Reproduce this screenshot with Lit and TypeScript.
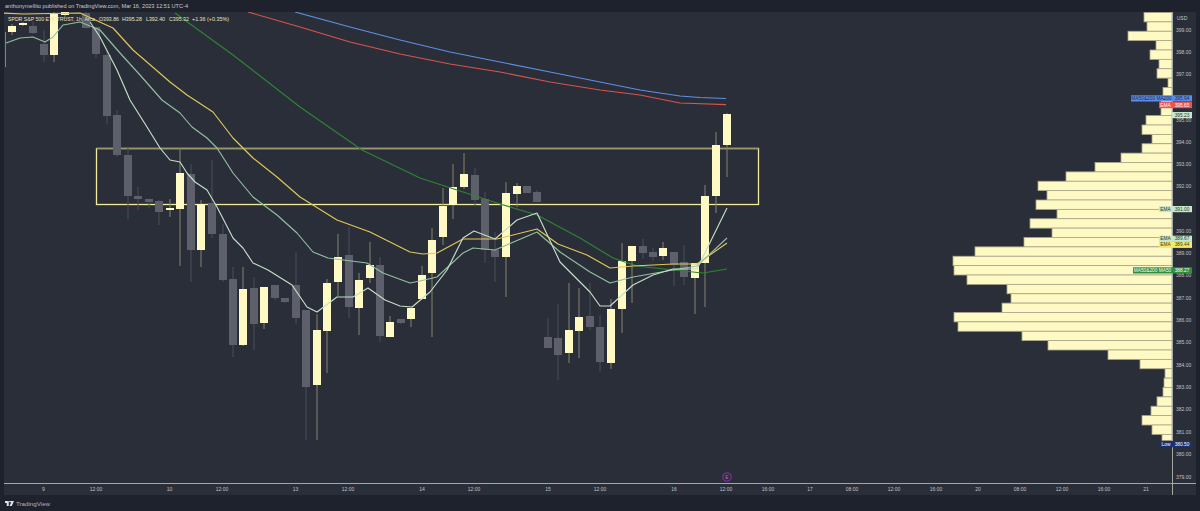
import { LitElement, html, css, svg } from "lit";
import { customElement } from "lit/decorators.js";

type C = [number, number, number, number, number, number];
const candles: C[] = [
  [8,26,32,24,35,1],[19,23,25,22,26,1],[29,26,33,22,34,0],[40,44,55,30,62,0],[50,14,55,12,62,1],[61,12,15,12,19,1],
  [82,13,28,12,28,0],[92,27,54,27,58,0],[103,55,116,50,124,0],[113,115,155,110,157,0],[124,155,196,148,219,0],
  [134,196,199,187,210,0],[145,199,202,199,208,0],[155,201,212,200,225,0],[166,208,210,199,217,1],[176,173,209,148,266,1],
  [187,174,250,164,282,0],[197,204,250,200,267,1],[208,203,234,160,238,0],[219,234,280,224,282,0],[229,279,345,267,357,0],
  [239,289,345,267,346,1],[250,288,324,277,350,0],[260,287,323,287,329,1],[271,285,298,285,300,0],[281,298,302,298,303,0],
  [292,285,318,252,324,0],[302,310,387,310,440,0],[313,330,385,314,440,1],[323,283,331,279,373,1],[334,257,282,234,296,1],
  [345,255,307,227,318,0],[355,280,308,273,335,1],[366,265,278,242,283,1],[376,265,336,257,342,0],[386,322,337,316,337,1],
  [397,319,323,319,324,0],[407,308,319,308,327,1],[418,275,299,266,299,1],[428,240,273,228,337,1],[439,206,237,188,245,1],
  [449,187,205,164,219,1],[460,174,187,153,189,1],[471,175,200,168,206,0],[481,199,250,192,263,0],[491,250,257,232,282,0],
  [502,193,257,182,297,1],[513,186,194,183,207,1],[523,186,193,186,193,0],[533,192,202,190,202,0],[544,337,348,318,348,0],
  [554,338,355,304,380,0],[565,330,353,283,363,1],[575,317,331,288,358,1],[586,316,327,283,330,0],[596,327,362,315,372,0],
  [607,309,363,299,369,1],[618,261,309,243,333,1],[628,246,261,246,303,1],[639,246,253,239,259,0],[649,252,257,248,261,0],
  [659,248,256,242,260,1],[670,252,265,252,286,0],[680,262,277,245,285,0],[691,263,278,263,314,1],[701,196,263,185,307,1],
  [712,145,196,132,213,1],[723,114,145,113,177,1],
];

const lines: { c: string; p: number[][] }[] = [
  { c: "#5f8fe6", p: [[295,12],[350,27],[400,40],[450,52],[500,62],[550,72],[600,82],[640,90],[680,96],[700,97.5],[726,98.5]] },
  { c: "#d9534f", p: [[248,12],[300,27],[350,42],[400,54],[450,64],[500,72],[550,82],[600,90],[640,95],[680,103],[726,104.6]] },
  { c: "#2e8534", p: [[175,13],[233,55],[300,107],[362,150],[420,178],[500,204],[537,215],[580,238],[613,258],[637,266],[673,270],[703,273],[727,269]] },
  { c: "#e0c955", p: [[0,13],[23,14],[80,13],[113,28],[133,50],[170,82],[187,95],[213,112],[233,138],[253,158],[277,177],[300,197],[337,220],[370,232],[410,252],[423,254],[437,253],[463,239],[497,239],[537,229],[558,244],[587,255],[610,268],[633,266],[673,264],[697,264],[727,243]] },
  { c: "#93bfa0", p: [[6,43],[20,38],[33,37],[45,42],[53,37],[63,25],[80,22],[100,30],[120,53],[140,75],[162,100],[180,113],[192,127],[207,138],[217,148],[233,173],[253,197],[277,215],[297,233],[313,252],[328,258],[367,263],[383,273],[410,283],[420,281],[437,277],[463,253],[473,248],[495,250],[537,232],[560,252],[590,272],[610,283],[633,277],[673,270],[697,266],[727,238]] },
  { c: "#c4dfc8", p: [[90,22],[100,37],[117,70],[130,100],[147,127],[160,148],[170,160],[180,162],[187,173],[195,182],[207,190],[217,207],[233,238],[243,248],[253,263],[268,270],[292,285],[307,307],[317,312],[337,297],[353,297],[368,288],[385,300],[400,306],[412,307],[430,292],[447,270],[463,238],[474,231],[495,239],[517,220],[537,213],[560,262],[590,292],[600,306],[610,306],[633,285],[653,275],[673,269],[697,269],[727,208]] },
];

const vp = [1144,1147,1128,1156,1150,1159,1157,1168,1163,1161,1161,1146,1142,1152,1142,1121,1095,1066,1038,1047,1036,1057,1030,1052,1024,975,953,954,967,1007,1011,1002,954,958,1022,1048,1108,1140,1165,1164,1163,1157,1151,1142,1152,1162];

const prices: [string, number][] = [["399.00",30],["398.00",52],["397.00",74.5],["395.00",120],["394.00",142],["393.00",164],["392.00",186.5],["390.00",231],["389.00",253],["388.00",275.5],["387.00",298],["386.00",320],["385.00",342.5],["384.00",365],["383.00",387],["382.00",409.5],["381.00",432],["380.00",454.5],["379.00",477]];
const times: [string, number][] = [["9",43.5],["12:00",96],["10",169.5],["12:00",222],["13",295.5],["12:00",348],["14",422],["12:00",474],["15",548],["12:00",600],["16",674],["12:00",726],["16:00",768],["17",810],["08:00",852],["12:00",894],["16:00",936],["20",978],["08:00",1020],["12:00",1062],["16:00",1104],["21",1146]];

type L = { y: number; x: number; name: string; val: string; bg: string; txt: string };
const labels: L[] = [
  { y: 95.3, x: 1131, name: "MA50&200 MA200", val: "395.94", bg: "#5b8dea", txt: "#1f2a44" },
  { y: 102, x: 1159, name: "EMA", val: "395.65", bg: "#ea5350", txt: "#ffffff" },
  { y: 112, x: 1172, name: "", val: "395.23", bg: "#c8e6c9", txt: "#2a3a2e" },
  { y: 206, x: 1159, name: "EMA", val: "391.00", bg: "#c8e6c9", txt: "#2a3a2e" },
  { y: 235.7, x: 1159, name: "EMA", val: "389.67", bg: "#c8e6c9", txt: "#2a3a2e" },
  { y: 241.7, x: 1159, name: "EMA", val: "389.44", bg: "#f6e96b", txt: "#3a3a20" },
  { y: 267.3, x: 1133, name: "MA50&200 MA50", val: "388.27", bg: "#2f8f3a", txt: "#ffffff" },
  { y: 441, x: 1160, name: "Low", val: "380.50", bg: "#1b2f6e", txt: "#ffffff" },
];

const legendParts: [string, number, number][] = [
  ["SPDR S&P 500 ETF TRUST, 1h, Arca", 8, 87],
  ["O393.86", 99, 20],
  ["H395.28", 122, 20],
  ["L392.40", 146, 19],
  ["C395.32", 169, 20],
  ["+1.36 (+0.35%)", 192, 37],
];

@customElement("app-root")
export class AppRoot extends LitElement {
  static styles = css`
    :host { display: block; width: 1200px; height: 511px; background: #1e222d; overflow: hidden; }
    .page { display: flex; flex-direction: column; width: 1200px; height: 511px; font-family: "Liberation Sans", Arial, sans-serif; }
    .head { height: 12px; padding-left: 5px; font-size: 5.6px; line-height: 12px; color: #c9cbce; white-space: nowrap; }
    .panel { height: 483px; margin: 0 4px; background: #2a2e39; }
    .chart { display: block; width: 1192px; height: 483px; }
    .foot { display: flex; align-items: center; gap: 2px; height: 16px; padding: 0 0 0 5px; color: #b2b5be; font-size: 6.2px; }
    .logo { width: 9px; height: 5px; display: block; }
    .wick-up { stroke: #85836f; }
    .wick-down { stroke: #4b4e59; }
    .up { fill: #fff9c4; }
    .down { fill: #5d606b; }
    .row { fill: #fff9c4; stroke: #a9a78c; stroke-width: 0.8; }
    .ln { fill: none; stroke-width: 1.15; stroke-linejoin: round; }
    .axis { stroke: #a3a8a3; stroke-width: 1; }
    .tick { font-size: 5px; fill: #c0c3c6; font-family: "Liberation Sans", Arial, sans-serif; }
    .legend { font-size: 5.4px; fill: #e6e4c4; font-family: "Liberation Sans", Arial, sans-serif; }
    .lab { font-size: 4.8px; font-family: "Liberation Sans", Arial, sans-serif; }
    .box { fill: none; stroke: #f3ec9c; stroke-width: 1.3; }
    .box-top { stroke: #98956f; stroke-width: 1.3; }
    .earth { fill: #2a2e39; stroke: #7b2ea0; stroke-width: 1.3; }
    .earth-t { font-size: 5px; fill: #a878cc; font-family: "Liberation Sans", Arial, sans-serif; }
  `;

  render() {
    return html`<div class="page">
      <div class="head">anthonymellito published on TradingView.com, Mar 16, 2023 12:51 UTC-4</div>
      <div class="panel">
        <svg class="chart" viewBox="4 12 1192 483">
          <rect class="box" x="96.5" y="148.5" width="662" height="56"></rect>
          <line class="box-top" x1="96.5" y1="148.5" x2="758.5" y2="148.5"></line>
          <line class="wick-up" x1="5.5" y1="32" x2="5.5" y2="67"></line>
          ${candles.map(([x, t, b, wt, wb, u]) => svg`
            <line class=${u ? "wick-up" : "wick-down"} x1=${x + 4} y1=${wt} x2=${x + 4} y2=${wb}></line>
            <rect class=${u ? "up" : "down"} x=${x} y=${t} width="8" height=${b - t}></rect>`)}
          ${lines.map((l) => svg`<polyline class="ln" stroke=${l.c} points=${l.p.map((q) => q.join(",")).join(" ")}></polyline>`)}
          ${vp.map((x, i) => svg`<rect class="row" x=${x} y=${12.5 + i * 9.375} width=${1172 - x} height=${i === 45 ? 6 : 9.375}></rect>`)}
          <line class="axis" x1="1172.5" y1="12" x2="1172.5" y2="495"></line>
          <line class="axis" x1="4" y1="483.5" x2="1196" y2="483.5"></line>
          <text class="tick" x="1182" y="20" text-anchor="middle">USD</text>
          ${prices.map(([t, y]) => svg`<text class="tick" x="1176" y=${y + 1.8}>${t}</text>`)}
          ${times.map(([t, x]) => svg`<text class="tick" x=${x} y="491" text-anchor="middle">${t}</text>`)}
          ${labels.map((l) => svg`
            <rect fill=${l.bg} x=${l.x} y=${l.y} width=${1192 - l.x} height="6.2"></rect>
            ${l.name ? svg`<text class="lab" fill=${l.txt} x=${(l.x + 1172) / 2} y=${l.y + 4.7} text-anchor="middle">${l.name}</text>` : ""}
            <text class="lab" fill=${l.txt} x="1182" y=${l.y + 4.7} text-anchor="middle">${l.val}</text>`)}
          ${legendParts.map(([t, x, w]) => svg`<text class="legend" x=${x} y="21" textLength=${w} lengthAdjust="spacingAndGlyphs">${t}</text>`)}
          <circle class="earth" cx="727" cy="477" r="4.2"></circle>
          <text class="earth-t" x="727" y="478.8" text-anchor="middle">E</text>
        </svg>
      </div>
      <div class="foot">
        <svg class="logo" viewBox="0 0 36 20" fill="#e0e3e8"><path d="M0 0h15v20H7V8H0zM17 0h19l-9 20h-9l7-15h-8z"></path></svg>
        <span>TradingView</span>
      </div>
    </div>`;
  }
}
